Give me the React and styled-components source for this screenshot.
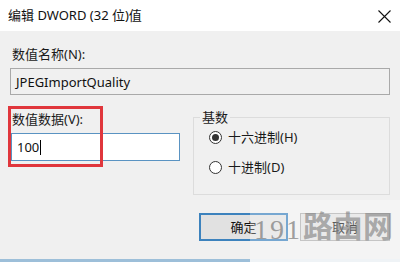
import React from "react";
import styled, { createGlobalStyle } from "styled-components";

const Global = createGlobalStyle`
  html, body { margin: 0; padding: 0; background: #f0f0f0; }
  body { font-family: "Noto Sans", "Noto Sans CJK SC", sans-serif; }
`;

const Window = styled.div`
  position: relative;
  width: 400px;
  height: 262px;
  overflow: hidden;
  background: #f0f0f0;
  display: flex;
  flex-direction: column;
  font-size: 13px;
  line-height: 16px;
  color: #000;
`;

const TitleBar = styled.div`
  height: 31px;
  flex: none;
  background: #fff;
  display: flex;
  align-items: center;
  justify-content: space-between;
  padding: 0 9px 0 8px;
`;

const Title = styled.span`
  font-size: 13px;
  color: #111;
  margin-top: -1px;
`;

const CloseIcon = styled.svg`
  width: 13px;
  height: 13px;
  margin-top: 1px;
`;

const Body = styled.div`
  padding: 15px 10px 0 10px;
  display: flex;
  flex-direction: column;
`;

const Label = styled.div`
  color: #1a1a1a;
  padding-left: 2px;
`;

const Field = styled.div`
  box-sizing: border-box;
  height: ${(p) => p.$h}px;
  width: ${(p) => (p.$w ? `${p.$w}px` : "auto")};
  margin-top: 6px;
  margin-left: ${(p) => p.$ml || 0}px;
  border: 1px solid ${(p) => (p.$focus ? "#5a93c2" : "#a9a9a9")};
  background: ${(p) => (p.$focus ? "#fff" : "#f0f0f0")};
  display: flex;
  align-items: center;
  padding-left: 5px;
  color: #111;
`;

const Caret = styled.span`
  display: inline-block;
  width: 1px;
  height: 15px;
  background: #000;
  margin-left: 1px;
`;

const Row = styled.div`
  display: flex;
  margin-top: 14px;
  gap: 13px;
`;

const LeftCol = styled.div`
  position: relative;
  padding-top: 2px;
  display: flex;
  flex-direction: column;
`;

const Highlight = styled.div`
  position: absolute;
  left: -2px;
  top: -3px;
  width: 95px;
  height: 61px;
  box-sizing: border-box;
  border: 3px solid #e0363c;
  pointer-events: none;
`;

const Group = styled.fieldset`
  margin: 0;
  width: 197px;
  height: 86px;
  box-sizing: border-box;
  border: 1px solid #dcdcdc;
  padding: 4px 0 0 15px;
  display: flex;
  flex-direction: column;
  gap: 14px;
`;

const Legend = styled.legend`
  padding: 0 2px;
  margin-left: -9px;
  color: #1a1a1a;
`;

const RadioRow = styled.div`
  display: flex;
  align-items: center;
  gap: 6px;
  color: #1a1a1a;
`;

const RadioCircle = styled.span`
  width: 13px;
  height: 13px;
  box-sizing: border-box;
  border: 1px solid #333;
  border-radius: 50%;
  background: #fff;
  display: flex;
  align-items: center;
  justify-content: center;
  &::after {
    content: "";
    width: 7px;
    height: 7px;
    border-radius: 50%;
    background: ${(p) => (p.$checked ? "#333" : "transparent")};
  }
`;

const Buttons = styled.div`
  display: flex;
  justify-content: flex-end;
  gap: 12px;
  margin-top: 18px;
`;

const Button = styled.div`
  box-sizing: border-box;
  width: ${(p) => p.$w}px;
  height: 28px;
  background: #e1e1e1;
  border: ${(p) => (p.$primary ? "2px solid #3c82bd" : "1px solid #adadad")};
  display: flex;
  align-items: center;
  justify-content: center;
  color: #111;
`;

const BottomStrip = styled.div`
  margin-top: auto;
  height: 3px;
  background: linear-gradient(to right, #9dbfd9 0, #9dbfd9 250px, #e8eef3 250px);
`;

const Watermark = styled.div`
  position: absolute;
  left: 250px;
  top: 200px;
  width: 150px;
  height: 62px;
  background: rgba(255, 255, 255, 0.3);
  display: flex;
  align-items: flex-start;
  padding-top: 8px;
  box-sizing: border-box;
  pointer-events: none;
`;

const WmDigits = styled.span`
  font-family: "Liberation Serif", serif;
  font-size: 28px;
  line-height: 30px;
  color: rgba(120, 120, 120, 0.7);
  letter-spacing: 2px;
  margin-left: 4px;
  margin-top: 7px;
`;

const WmText = styled.span`
  font-family: "Noto Sans CJK SC", sans-serif;
  font-weight: 700;
  font-size: 30px;
  line-height: 32px;
  color: rgba(130, 130, 130, 0.65);
  margin-left: 1px;
`;

export default function App() {
  return (
    <>
      <Global />
      <Window>
        <TitleBar>
          <Title>编辑 DWORD (32 位)值</Title>
          <CloseIcon viewBox="0 0 13 13">
            <path d="M0.5 0.5 L12.5 12.5 M12.5 0.5 L0.5 12.5" stroke="#111" strokeWidth="1.1" fill="none" />
          </CloseIcon>
        </TitleBar>
        <Body>
          <Label>数值名称(N):</Label>
          <Field $h={27}>JPEGImportQuality</Field>
          <Row>
            <LeftCol>
              <Label>数值数据(V):</Label>
              <Field $h={28} $w={169} $ml={1} $focus>
                100<Caret />
              </Field>
              <Highlight />
            </LeftCol>
            <Group>
              <Legend>基数</Legend>
              <RadioRow>
                <RadioCircle $checked />
                十六进制(H)
              </RadioRow>
              <RadioRow>
                <RadioCircle />
                十进制(D)
              </RadioRow>
            </Group>
          </Row>
          <Buttons>
            <Button $w={89} $primary>确定</Button>
            <Button $w={90}>取消</Button>
          </Buttons>
        </Body>
        <BottomStrip />
        <Watermark>
          <WmDigits>191</WmDigits>
          <WmText>路由网</WmText>
        </Watermark>
      </Window>
    </>
  );
}
